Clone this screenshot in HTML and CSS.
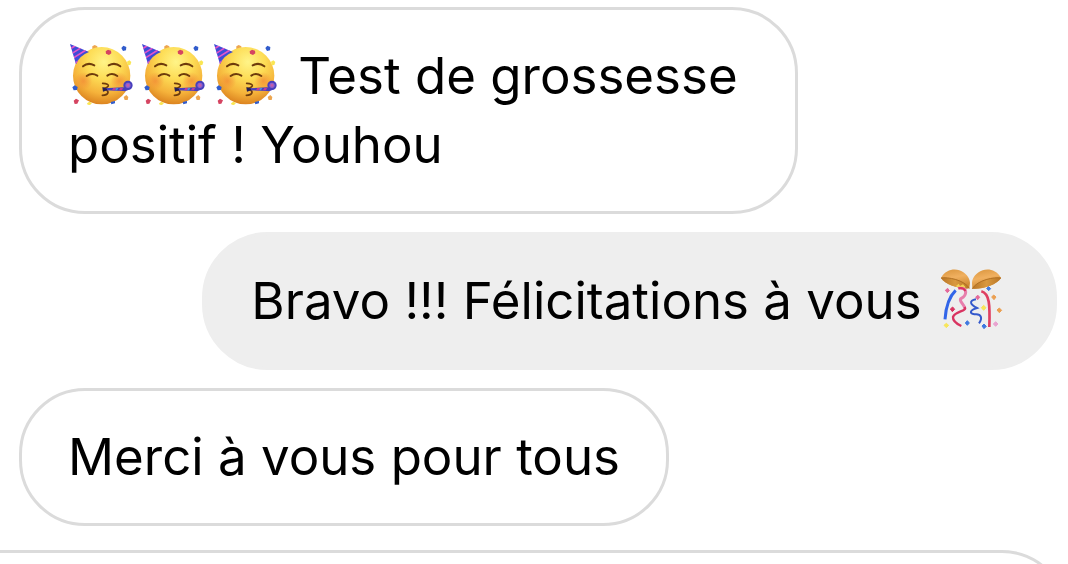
FILE: index.html
```html
<!DOCTYPE html>
<html lang="fr">
<head>
  <meta charset="UTF-8" />
  <meta name="viewport" content="width=device-width, initial-scale=1.0"/>
  <title>Messages</title>
  <link rel="stylesheet" href="styles.css">
</head>
<body>
  <svg class="sprites" aria-hidden="true">
    <defs>
      <radialGradient id="faceFill" cx="0.54" cy="0.26" r="0.74">
        <stop offset="0" stop-color="#fff488"/>
        <stop offset="0.4" stop-color="#fddc55"/>
        <stop offset="0.75" stop-color="#f5b23a"/>
        <stop offset="1" stop-color="#dc8420"/>
      </radialGradient>
      <radialGradient id="cheek">
        <stop offset="0" stop-color="#f28a35" stop-opacity="0.75"/>
        <stop offset="1" stop-color="#f28a35" stop-opacity="0"/>
      </radialGradient>
      <linearGradient id="gold" x1="0" y1="0" x2="0.3" y2="1">
        <stop offset="0" stop-color="#d9943c"/>
        <stop offset="0.5" stop-color="#f0b060"/>
        <stop offset="1" stop-color="#cf8a32"/>
      </linearGradient>
      <linearGradient id="bowl" x1="0" y1="0" x2="1" y2="0">
        <stop offset="0" stop-color="#b87526"/>
        <stop offset="0.5" stop-color="#d9993f"/>
        <stop offset="1" stop-color="#b87526"/>
      </linearGradient>
      <clipPath id="hatClip"><path d="M30 27 L87 51 Q58 62 48 88 Z"/></clipPath>
    </defs>

    <symbol id="party" viewBox="24 21 216 198">
      <path d="M97 34 l7 -4 8 4 1 10 -16 1z" fill="#eda650"/>
      <circle cx="125" cy="122" r="86" fill="url(#faceFill)"/>
      <circle cx="70" cy="138" r="27" fill="url(#cheek)"/>
      <circle cx="178" cy="138" r="27" fill="url(#cheek)"/>
      <g clip-path="url(#hatClip)">
        <path d="M28 24 H90 V90 H28z" fill="#3f4bd6"/>
        <path d="M31 41 L51 29 M35 56 L65 37 M38 70 L78 45 M43 86 L90 56" stroke="#e354c9" stroke-width="5"/>
      </g>
      <g fill="none" stroke="#6e3c0c" stroke-width="6" stroke-linecap="round">
        <path d="M69 94 Q84 81 103 91 M146 91 Q165 81 181 94"/>
        <path d="M80 123 Q95 112 112 122 M142 122 Q156 112 172 123"/>
        <path d="M128 145 Q147 146 145 153 Q142 159 129 161 Q145 165 144 173 Q141 181 127 181" stroke-width="5"/>
      </g>
      <path d="M132 160 L190 157 Q200 160 205 158 L208 163 Q200 170 190 168 L132 166z" fill="#463fba"/>
      <circle cx="204" cy="151" r="11" fill="#8f62cc" stroke="#473fbd" stroke-width="6"/>
      <circle cx="204" cy="151" r="4" fill="#c75ca8"/>
      <path d="M160 159 h9 l-4 7 h-9z M181 159 h8 l-3 7 h-9z" fill="#c33b98"/>
      <path d="M169 159 h6 l-4 7 h-6z" fill="#4a91df"/>
      <path d="M127 156 l14 5 v5 l-12 4z" fill="#241f55"/>
      <path d="M137 49 l7 -5 9 3 1 8 -7 5 -9 -4z M41 197 l7 -6 9 5 -5 10 -8 1z" fill="#d54461"/>
      <path d="M184 39 l6 -7 9 4 -1 10 -9 2z M37 157 l7 -6 9 5 -2 9 -10 1z M152 201 l13 -3 0 7 -11 3z" fill="#315ccc"/>
      <path d="M201 80 l7 -4 6 5 -3 9 -8 1z M81 205 l7 -5 8 4 -6 6 -7 -1z" fill="#fae653"/>
      <path d="M191 186 l8 -6 6 6 -2 9 -9 0z" fill="#eda650"/>
    </symbol>

    <symbol id="confetti" viewBox="18 23 216 198">
      <path d="M33 56 C46 31 72 27 88 33 C108 40 119 56 120 70 L118 87 C91 89 45 77 33 56z" fill="url(#gold)"/>
      <path d="M33 56 C52 52 104 62 118 87 C91 90 45 77 33 56z" fill="url(#bowl)"/>
      <path d="M33 56 C52 52 104 62 118 87" fill="none" stroke="#b06f22" stroke-width="3"/>
      <path d="M213 56 C200 31 174 27 158 33 C138 40 127 56 126 70 L127 88 C154 91 201 77 213 56z" fill="url(#gold)"/>
      <path d="M213 56 C194 52 142 62 127 88 C154 91 201 77 213 56z" fill="url(#bowl)"/>
      <path d="M213 56 C194 52 142 62 127 88" fill="none" stroke="#b06f22" stroke-width="3"/>
      <path d="M77 81 l9 -8 4 7 9 -5 8 9 -8 4z" fill="#f2d254"/>
      <path d="M77 93 Q49 120 45 180" fill="none" stroke="#3265e8" stroke-width="9"/>
      <path d="M85 87 C118 83 108 110 94 117 C83 124 108 139 104 149" fill="none" stroke="#e77fac" stroke-width="9"/>
      <path d="M104 143 C112 157 76 154 69 173 Q68 188 94 200" fill="none" stroke="#d93461" stroke-width="7"/>
      <path d="M85 87 Q101 83 106 95" fill="none" stroke="#d93461" stroke-width="6"/>
      <path d="M154 96 C179 103 180 136 178 203" fill="none" stroke="#df3f61" stroke-width="8"/>
      <path d="M138 120 C114 124 122 136 141 146 C116 154 120 163 133 165 C155 162 158 177 147 192" fill="none" stroke="#3459cc" stroke-width="6"/>
      <g stroke-width="3" stroke-linejoin="round">
        <path d="M46 93 l7 -6 5 7 -6 6z M137 113 l7 -5 5 6 -6 7z" fill="#e4699a" stroke="#e4699a"/>
        <path d="M61 149 l7 -6 6 7 -7 7z" fill="#d93461" stroke="#d93461"/>
        <path d="M170 87 l6 -5 6 6 -6 6z M106 191 l6 -7 6 7 -6 7z M156 200 l6 -6 7 7 -7 7z" fill="#3e78e0" stroke="#3e78e0"/>
        <path d="M154 145 l7 -7 7 7 -7 8z M42 198 l7 -6 7 6 -7 7z" fill="#f8e65a" stroke="#f8e65a"/>
        <path d="M185 113 l6 -6 7 6 -6 8z M201 152 l7 -6 7 7 -7 7z" fill="#eba052" stroke="#eba052"/>
        <path d="M190 194 l7 -7 7 7 -7 7z" fill="#e9a3d0" stroke="#e9a3d0"/>
      </g>
    </symbol>
  </svg>

  <main class="chat">
    <p class="bubble received"><svg class="emoji" role="img" aria-label="Visage festif"><use href="#party"/></svg><svg class="emoji" role="img" aria-label="Visage festif"><use href="#party"/></svg><svg class="emoji" role="img" aria-label="Visage festif"><use href="#party"/></svg> Test de grossesse positif ! Youhou</p>
    <p class="bubble sent">Bravo !!! Félicitations à vous <svg class="emoji" role="img" aria-label="Boule de confettis"><use href="#confetti"/></svg></p>
    <p class="bubble received">Merci à vous pour tous</p>
    <div class="composer"></div>
  </main>
</body>
</html>
```
FILE: styles.css
```css
:root {
  --bg: #ffffff;
  --text: #000000;
  --line: #dbdbdb;
  --sent: #eeeeee;
}
* {
  margin: 0; padding: 0; box-sizing: border-box;
}
body {
  background: var(--bg);
  color: var(--text);
  font-family: Inter, "Liberation Sans", sans-serif;
  font-size: 51px;
  line-height: 69px;
}
.sprites {
  position: absolute;
  width: 0;
  height: 0;
}
.chat {
  display: flex;
  flex-direction: column;
  gap: 18px;
  height: 100vh;
  padding: 7px 11px 0 19px;
  overflow: hidden;
}
.bubble {
  flex-shrink: 0;
  padding: 31px 46px 32px;
  border: 3px solid var(--line);
  border-radius: 66px;
}
.received {
  align-self: flex-start;
  max-width: 75%;
}
.sent {
  align-self: flex-end;
  background: var(--sent);
  border-color: var(--sent);
}
.emoji {
  display: inline-block;
  width: 72px;
  height: 66px;
  vertical-align: -14px;
}
/* runs off the left and bottom edges of the window */
.composer {
  flex-shrink: 0;
  height: 138px;
  margin: 6px -11px 0 -19px;
  border: 3px solid var(--line);
  border-left: none;
  border-radius: 0 66px 66px 0;
}
```
